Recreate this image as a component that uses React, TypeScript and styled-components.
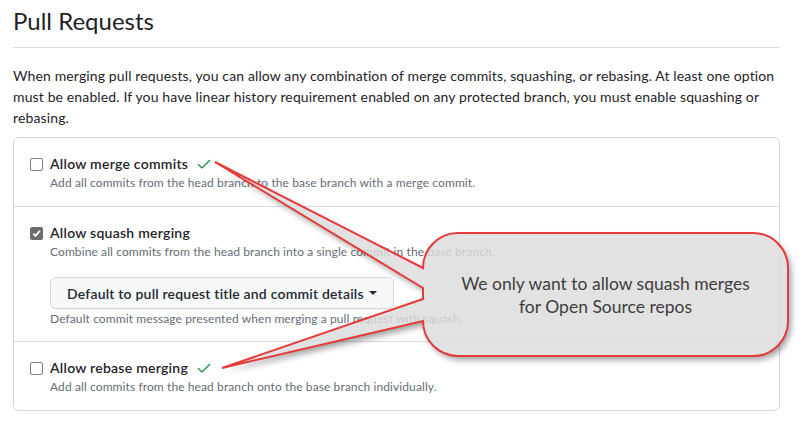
import React from "react";
import styled, { createGlobalStyle } from "styled-components";

const GlobalStyle = createGlobalStyle`
  html, body { margin: 0; padding: 0; background: #ffffff; }
  body {
    font-family: Lato, "Noto Sans", sans-serif;
    color: #1f2328;
  }
`;

const Page = styled.div`
  position: relative;
  width: 806px;
  height: 422px;
  overflow: hidden;
  box-sizing: border-box;
  padding: 3px 26px 0 13px;
`;

const Subhead = styled.div`
  border-bottom: 1px solid #d8dee4;
  padding-bottom: 8px;
`;

const Heading = styled.h2`
  margin: 0;
  font-size: 24px;
  line-height: 36px;
  font-weight: 400;
  color: #1f2328;
`;

const Intro = styled.p`
  margin: 17px 0 9px;
  font-size: 14px;
  line-height: 21px;
  letter-spacing: 0.13px;
`;

const Box = styled.div`
  border: 1px solid #d0d7de;
  border-radius: 6px;
`;

const Row = styled.div<{ $pb: number }>`
  display: flex;
  align-items: flex-start;
  padding: 16px 16px ${(p) => p.$pb}px;
  & + & {
    border-top: 1px solid #d8dee4;
  }
`;

const Box13 = styled.span<{ $checked?: boolean }>`
  flex-shrink: 0;
  width: 13px;
  height: 13px;
  box-sizing: border-box;
  margin: 4px 7px 0 0;
  border: 1px solid ${(p) => (p.$checked ? "#6d6d6d" : "#808080")};
  border-radius: 2px;
  background: ${(p) => (p.$checked ? "#6d6d6d" : "#ffffff")};
  display: flex;
  align-items: center;
  justify-content: center;
`;

const Content = styled.div`
  display: flex;
  flex-direction: column;
  align-items: flex-start;
`;

const Label = styled.div`
  display: flex;
  align-items: center;
  font-size: 14px;
  line-height: 20px;
  font-weight: 600;
  letter-spacing: 0.25px;
  color: #1f2328;
`;

const Note = styled.div<{ $mt?: number }>`
  margin-top: ${(p) => p.$mt ?? 0}px;
  font-size: 12px;
  line-height: 18px;
  letter-spacing: 0.1px;
  color: #656d76;
`;

const OkIcon = styled.svg`
  margin-left: 8px;
  flex-shrink: 0;
`;

const SelectButton = styled.button`
  margin-top: 16px;
  display: inline-flex;
  align-items: center;
  height: 32px;
  padding: 0 16px;
  box-sizing: border-box;
  font-family: inherit;
  font-size: 14px;
  font-weight: 600;
  letter-spacing: 0.2px;
  color: #24292f;
  background: #f6f8fa;
  border: 1px solid #d0d7de;
  border-radius: 6px;
  box-shadow: 0 1px 0 rgba(31, 35, 40, 0.04);
`;

const Caret = styled.span`
  display: inline-block;
  margin-left: 5px;
  border-top: 4px solid #24292f;
  border-left: 4px solid transparent;
  border-right: 4px solid transparent;
`;

const Overlay = styled.svg`
  position: absolute;
  left: 0;
  top: 0;
  pointer-events: none;
`;

const CalloutText = styled.div`
  position: absolute;
  left: 423px;
  top: 233px;
  width: 365px;
  height: 123px;
  display: flex;
  flex-direction: column;
  align-items: center;
  justify-content: center;
  font-family: Lato, "Open Sans", sans-serif;
  font-size: 17.5px;
  line-height: 23px;
  color: #3d3d3d;
  text-align: center;
  pointer-events: none;
`;

const Checkbox = ({ checked }: { checked?: boolean }) => (
  <Box13 $checked={checked} role="checkbox" aria-checked={!!checked}>
    {checked && (
      <svg width="9" height="9" viewBox="0 0 9 9">
        <polyline points="1.3,4.7 3.5,6.9 7.8,1.9" fill="none" stroke="#ffffff" strokeWidth="1.8" />
      </svg>
    )}
  </Box13>
);

const Ok = () => (
  <OkIcon width="16" height="16" viewBox="0 0 16 16">
    <polyline points="2.4,8.4 5.9,11.9 13.6,4.4" fill="none" stroke="#2a8c45" strokeWidth="1.35" strokeLinecap="round" strokeLinejoin="round" />
  </OkIcon>
);

const bubblePath =
  "M 458 233 A 35 35 0 0 0 423 268 L 215 162 L 423 288 L 423 299 L 222 368 L 423 321 A 35 35 0 0 0 458 356 L 753 356 A 35 35 0 0 0 788 321 L 788 268 A 35 35 0 0 0 753 233 Z";

export default function App() {
  return (
    <Page>
      <GlobalStyle />
      <Subhead>
        <Heading>Pull Requests</Heading>
      </Subhead>
      <Intro>
        When merging pull requests, you can allow any combination of merge commits, squashing, or rebasing. At least one
        option must be enabled. If you have linear history requirement enabled on any protected branch, you must enable
        squashing or rebasing.
      </Intro>
      <Box>
        <Row $pb={14}>
          <Checkbox />
          <Content>
            <Label>
              Allow merge commits
              <Ok />
            </Label>
            <Note>Add all commits from the head branch to the base branch with a merge commit.</Note>
          </Content>
        </Row>
        <Row $pb={13}>
          <Checkbox checked />
          <Content>
            <Label>Allow squash merging</Label>
            <Note>Combine all commits from the head branch into a single commit in the base branch.</Note>
            <SelectButton type="button">
              Default to pull request title and commit details
              <Caret />
            </SelectButton>
            <Note $mt={1}>Default commit message presented when merging a pull request with squash.</Note>
          </Content>
        </Row>
        <Row $pb={14}>
          <Checkbox />
          <Content>
            <Label>
              Allow rebase merging
              <Ok />
            </Label>
            <Note>Add all commits from the head branch onto the base branch individually.</Note>
          </Content>
        </Row>
      </Box>

      <Overlay width="806" height="422" viewBox="0 0 806 422">
        <defs>
          <filter id="blur" x="-10%" y="-10%" width="120%" height="130%">
            <feGaussianBlur stdDeviation="3" />
          </filter>
          <mask id="outside" maskUnits="userSpaceOnUse" x="0" y="0" width="806" height="422">
            <rect x="0" y="0" width="806" height="422" fill="#fff" />
            <path d={bubblePath} fill="#000" />
          </mask>
        </defs>
        <g mask="url(#outside)">
          <path d={bubblePath} transform="translate(3 4)" fill="#000" opacity="0.38" filter="url(#blur)" />
        </g>
        <path d={bubblePath} fill="#dcdcdc" fillOpacity="0.83" />
        <path d={bubblePath} fill="none" stroke="#e53b3b" strokeWidth="2" strokeLinejoin="miter" />
      </Overlay>
      <CalloutText>
        <span>We only want to allow squash merges</span>
        <span>for Open Source repos</span>
      </CalloutText>
    </Page>
  );
}
